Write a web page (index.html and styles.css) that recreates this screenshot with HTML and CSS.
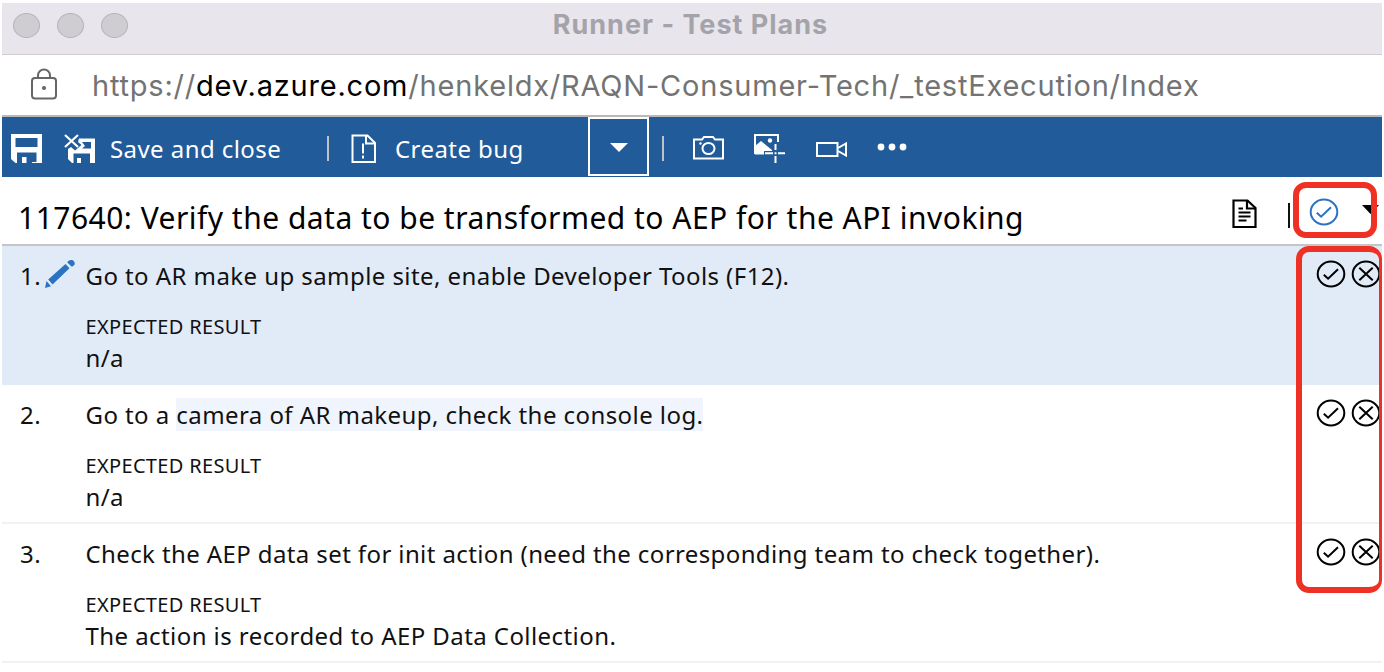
FILE: index.html
```html
<!DOCTYPE html>
<html lang="en">
<head>
<meta charset="utf-8">
<title>Runner - Test Plans</title>
<link rel="stylesheet" href="styles.css">
</head>
<body>
<svg class="defs" width="0" height="0">
  <symbol id="pass" viewBox="0 0 30 28">
    <ellipse cx="15" cy="14" rx="13.3" ry="12.4" fill="none" stroke="currentColor" stroke-width="2"/>
    <path d="M7.8 14.7l4.3 4L22 9.2" fill="none" stroke="currentColor" stroke-width="2"/>
  </symbol>
  <symbol id="fail" viewBox="0 0 30 28">
    <ellipse cx="15" cy="14" rx="13.3" ry="12.4" fill="none" stroke="currentColor" stroke-width="2"/>
    <path d="M8.3 7.8l13.4 12.4M21.7 7.8L8.3 20.2" fill="none" stroke="currentColor" stroke-width="2"/>
  </symbol>
</svg>
<div class="window">
  <header class="titlebar">
    <div class="lights"><i class="light"></i><i class="light"></i><i class="light"></i></div>
    <span class="window-title">Runner - Test Plans</span>
  </header>
  <div class="address">
    <svg class="lock" width="28" height="32" viewBox="0 0 28 32" fill="none" stroke="#666" stroke-width="2">
      <rect x="2" y="10" width="24" height="20.5" rx="3"/>
      <path d="M8 10V7.500a6 6 0 0 1 12 0V10"/>
      <circle cx="14" cy="20" r="2.100" fill="#666" stroke="none"/>
    </svg>
    <span class="url"><span class="scheme">https://</span><span class="host">dev.azure.com</span><span class="path">/henkeldx/RAQN-Consumer-Tech/_testExecution/Index</span></span>
  </div>
  <nav class="toolbar">
    <svg class="save" width="31" height="29" viewBox="0 0 31 29">
      <path fill="#fff" fill-rule="evenodd" d="M0 0h31v29H25.500V18.500H6V29H4.500L0 25zM4.500 4v9h22V4z"/>
      <path fill="#fff" d="M11 23h4.500v6H11zM21 28h5v1h-5z"/>
    </svg>
    <svg class="save-close" width="32" height="30" viewBox="0 0 32 30">
      <path d="M1 1l13 12M14 1L1 13" stroke="#fff" stroke-width="2.200"/>
      <path fill="#fff" fill-rule="evenodd" d="M15 4.500h16V29H26V19.500H9.500V29H8l-4-4V15l3-2 4 3.500L17.500 11 14 8zM18 8l3 4-3 2.500h9V8z"/>
      <path fill="#fff" d="M13 24h4v5h-4z"/>
    </svg>
    <span class="label save-label">Save and close</span>
    <i class="sep"></i>
    <svg class="bug" width="26" height="30" viewBox="0 0 26 30" fill="none" stroke="#fff" stroke-width="2">
      <path d="M1.500 1.500h15L24 9v19H1.500z"/><path d="M15 1.500V9.500h9"/>
      <path d="M12 9.500v10M12 21.500v3"/>
    </svg>
    <span class="label bug-label">Create bug</span>
    <span class="drop"><svg width="18" height="9" viewBox="0 0 18 9"><path d="M0 0h18L9 9z" fill="#fff"/></svg></span>
    <i class="sep sep-two"></i>
    <svg class="camera" width="31" height="24" viewBox="0 0 31 24" fill="none" stroke="#fff" stroke-width="2">
      <path d="M1 3.500h8l2-2.500h9l2 2.500h8V22.500H1z"/><ellipse cx="15.500" cy="12.500" rx="6" ry="5.500"/>
      <circle cx="7.500" cy="7.500" r="1.200" fill="#fff" stroke="none"/>
    </svg>
    <svg class="shot" width="31" height="29" viewBox="0 0 31 29">
      <path d="M1 20V1h23v7" fill="none" stroke="#fff" stroke-width="2"/>
      <path d="M1 12l6-5 6 5 5 4v1h-8v3.500H1z" fill="#fff"/><circle cx="16" cy="6.500" r="2.200" fill="#fff"/>
      <path d="M21.500 10v6M21.500 22v7M11 19.300h8M24 19.300h7M21.500 18.300v2" stroke="#fff" stroke-width="2"/>
    </svg>
    <svg class="video" width="31" height="15" viewBox="0 0 31 15" fill="none" stroke="#fff" stroke-width="2">
      <path d="M1 1h20.500v13H1z"/><path d="M22 6l8-4.500v12L22 9"/>
    </svg>
    <svg class="more" width="30" height="8" viewBox="0 0 30 8" fill="#fff"><circle cx="4" cy="4" r="3.400"/><circle cx="15" cy="4" r="3.400"/><circle cx="26" cy="4" r="3.400"/></svg>
  </nav>
  <section class="case">
    <h1 class="case-title">117640: Verify the data to be transformed to AEP for the API invoking</h1>
    <svg class="note" width="26" height="30" viewBox="0 0 26 30" fill="none" stroke="#000" stroke-width="2.200">
      <path d="M1.500 1.500h14L23.500 9v19h-22z"/><path d="M15 1.500V9.500h8.500" /><path d="M6.500 9.500h4.500M6.500 13.500h12M6.500 17.500h12M6.500 21.500h8" stroke-width="2"/>
    </svg>
    <i class="case-sep"></i>
    <svg class="case-pass" width="30" height="28"><use href="#pass"/></svg>
    <svg class="case-drop" width="17" height="9" viewBox="0 0 17 9"><path d="M0 0h17L8.500 9z"/></svg>
  </section>
  <main class="steps">
    <article class="step active">
      <div class="num">1.<svg class="pencil" width="30" height="28" viewBox="0 0 30 28" fill="#2b73c2"><path d="M0 28l1.500-7 4.500 5.200zM3.200 19.500L20.500 4l4 4.300L7.500 24.500zM22.300 2.500C24-.5 27.500-.5 29 1.500s.8 4-2.200 5.200z"/></svg></div>
      <div class="body">
        <p class="action">Go to AR make up sample site, enable Developer Tools (F12).</p>
        <p class="caption">EXPECTED RESULT</p>
        <p class="result">n/a</p>
      </div>
      <div class="marks"><svg width="30" height="28"><use href="#pass"/></svg><svg width="30" height="28"><use href="#fail"/></svg></div>
    </article>
    <article class="step">
      <div class="num">2.</div>
      <div class="body">
        <p class="action">Go to a <span class="hl">camera of AR makeup, check the console log.</span></p>
        <p class="caption">EXPECTED RESULT</p>
        <p class="result">n/a</p>
      </div>
      <div class="marks"><svg width="30" height="28"><use href="#pass"/></svg><svg width="30" height="28"><use href="#fail"/></svg></div>
    </article>
    <article class="step">
      <div class="num">3.</div>
      <div class="body">
        <p class="action long">Check the AEP data set for init action (need the corresponding team to check together).</p>
        <p class="caption">EXPECTED RESULT</p>
        <p class="result">The action is recorded to AEP Data Collection.</p>
      </div>
      <div class="marks"><svg width="30" height="28"><use href="#pass"/></svg><svg width="30" height="28"><use href="#fail"/></svg></div>
    </article>
  </main>
  <div class="frame frame-case"></div>
  <div class="frame frame-steps"></div>
</div>
</body>
</html>
```
FILE: styles.css
```css
* { box-sizing: border-box; }
body { margin: 0; background: #fff; color: #111; font-family: "Noto Sans", "Open Sans", sans-serif; overflow: hidden; }
svg { display: block; flex: none; }
.defs { position: absolute; }
.window { position: relative; height: 672px; padding: 3px 2px 0; white-space: nowrap; }
.titlebar { display: grid; grid-template-columns: 1fr auto 1fr; height: 52px; background: #e8e5ec; border-bottom: 1px solid #cfcdd0; font-family: Inter, sans-serif; }
.lights { display: flex; gap: 17px; padding: 10px 0 0 11px; }
.light { width: 27px; height: 25px; border-radius: 50%; background: #cfccd2; border: 1px solid #b5b2b8; }
.window-title { color: #a5a3aa; font-size: 27px; font-weight: 700; line-height: 44px; letter-spacing: 1px; margin-right: 3px; }
.address { display: flex; align-items: center; height: 60px; padding: 0 0 2px 28px; gap: 34px; font-family: Inter, sans-serif; font-size: 29px; letter-spacing: 0.79px; color: #737373; }
.url { padding-top: 2px; }
.host { color: #000; }
.toolbar { display: flex; align-items: flex-start; height: 62px; background: #225b99; border-top: 2px solid #bbb9b7; color: #fff; }
.save { margin: 17px 0 0 9px; }
.save-close { margin: 17px 0 0 22px; }
.label { font-size: 24px; line-height: 32px; margin-top: 16px; letter-spacing: 0.43px; }
.save-label { margin-left: 14px; width: 217px; }
.sep { width: 2px; height: 25px; margin-top: 19px; background: #bdc3c6; }
.bug { margin: 17px 0 0 22px; }
.bug-label { margin-left: 18px; width: 193px; }
.drop { width: 61px; height: 59px; border: 2px solid #fff; display: grid; place-items: center; padding-top: 2px; }
.sep-two { margin-left: 13px; }
.camera { margin: 19px 0 0 29px; }
.shot { margin: 17px 0 0 30px; }
.video { margin: 25px 0 0 31px; }
.more { margin: 26px 0 0 30px; }
.case { display: flex; height: 69px; border-bottom: 2px solid #c5c5c5; padding-left: 16px; color: #000; }
.case-title { margin: 21px 0 0; width: 1214px; font-size: 30px; font-weight: 400; line-height: 40px; letter-spacing: 0.48px; }
.note { margin-top: 22px; }
.case-sep { width: 2px; height: 25px; margin: 26px 0 0 30px; background: #111; }
.case-pass { margin: 21px 0 0 19px; color: #2b73c2; }
.case-drop { margin: 28px 0 0 23px; }
.step { display: flex; height: 139px; padding-left: 18px; border-bottom: 2px solid #f2f2f2; font-size: 24px; line-height: 32px; letter-spacing: 0.43px; }
.active { background: #e1ebf8; border-bottom-color: #e1ebf8; }
.num { display: flex; width: 65.5px; padding-top: 14px; }
.pencil { margin-left: 4px; }
.body { width: 1230px; padding-top: 14px; }
.body p { margin: 0; }
.body .long { letter-spacing: 0.39px; }
.body .caption { font-size: 20px; margin: 19px 0 -1px; letter-spacing: 0.33px; }
.hl { background: #f0f5fd; }
.marks { display: flex; gap: 5px; padding-top: 14px; color: #000; }
.frame { position: absolute; border: 6px solid #ee3124; border-radius: 13px; }
.frame-case { left: 1293px; top: 182px; width: 84px; height: 56px; }
.frame-steps { left: 1296px; top: 246px; width: 86px; height: 347px; border-right-width: 3px; }
```
